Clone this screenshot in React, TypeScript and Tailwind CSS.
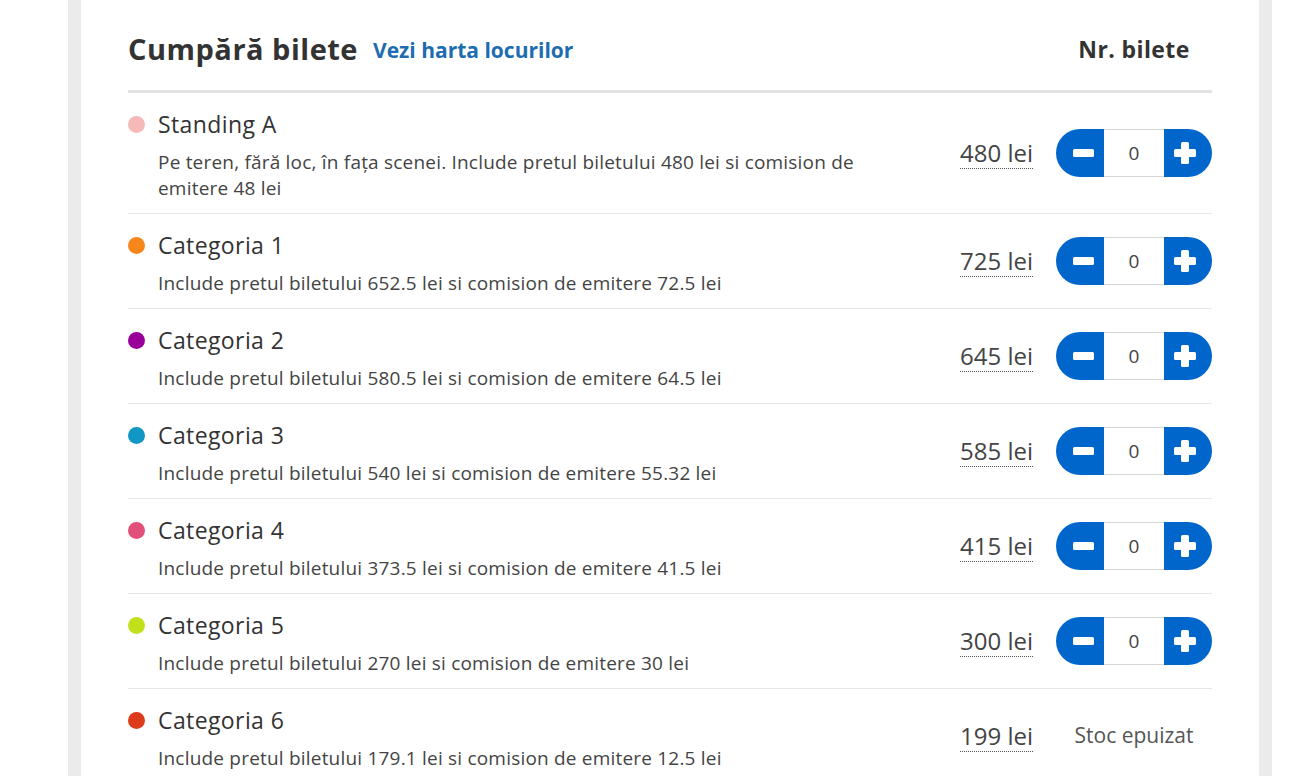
import { useState } from "react";

interface Ticket {
  name: string;
  desc: string;
  price: number;
  color: string;
  soldOut?: boolean;
}

const tickets: Ticket[] = [
  {
    name: "Standing A",
    desc: "Pe teren, fără loc, în fața scenei. Include pretul biletului 480 lei si comision de emitere 48 lei",
    price: 480,
    color: "#f5b9b7",
  },
  { name: "Categoria 1", desc: "Include pretul biletului 652.5 lei si comision de emitere 72.5 lei", price: 725, color: "#f7861c" },
  { name: "Categoria 2", desc: "Include pretul biletului 580.5 lei si comision de emitere 64.5 lei", price: 645, color: "#990099" },
  { name: "Categoria 3", desc: "Include pretul biletului 540 lei si comision de emitere 55.32 lei", price: 585, color: "#1197c4" },
  { name: "Categoria 4", desc: "Include pretul biletului 373.5 lei si comision de emitere 41.5 lei", price: 415, color: "#e0507b" },
  { name: "Categoria 5", desc: "Include pretul biletului 270 lei si comision de emitere 30 lei", price: 300, color: "#c3e01c" },
  {
    name: "Categoria 6",
    desc: "Include pretul biletului 179.1 lei si comision de emitere 12.5 lei",
    price: 199,
    color: "#dc3b1c",
    soldOut: true,
  },
];

function Stepper() {
  const [count, setCount] = useState(0);
  return (
    <div className="flex h-[48px] w-[156px]">
      <button
        onClick={() => setCount((c) => Math.max(0, c - 1))}
        className="flex w-[48px] items-center justify-center rounded-l-full bg-[#0066cc] pl-[6px]"
      >
        <svg width="21" height="8" viewBox="0 0 21 8">
          <rect x="0" y="0" width="21" height="8" rx="1.5" fill="#fff" />
        </svg>
      </button>
      <div className="flex w-[60px] items-center justify-center border-y border-[#d6d6d6] bg-white text-[19px] text-[#444]">
        {count}
      </div>
      <button
        onClick={() => setCount((c) => c + 1)}
        className="flex w-[48px] items-center justify-center rounded-r-full bg-[#0066cc] pr-[6px]"
      >
        <svg width="22" height="22" viewBox="0 0 22 22">
          <rect x="7" y="0" width="8" height="22" rx="1.5" fill="#fff" />
          <rect x="0" y="7" width="22" height="8" rx="1.5" fill="#fff" />
        </svg>
      </button>
    </div>
  );
}

function TicketRow({ t }: { t: Ticket }) {
  return (
    <div className="flex items-center border-b border-[#e6e6e6]">
      <div className="flex-1 pt-[15px] pb-[12px]">
        <div className="flex items-center">
          <span className="h-[17px] w-[17px] shrink-0 rounded-full" style={{ backgroundColor: t.color }} />
          <span className="ml-[13px] text-[23px] leading-[32px] tracking-[0.4px] text-[#333]">{t.name}</span>
        </div>
        <div className="mt-[9px] ml-[30px] max-w-[702px] text-[19px] leading-[26px] tracking-[0.2px] text-[#444]">
          {t.desc}
        </div>
      </div>
      <div className="mr-[23px] border-b border-dotted border-[#555] text-[24px] leading-[30px] text-[#444]">
        {t.price} lei
      </div>
      {t.soldOut ? (
        <div className="flex w-[156px] justify-center text-[21px] text-[#555]">Stoc epuizat</div>
      ) : (
        <Stepper />
      )}
    </div>
  );
}

export default function App() {
  return (
    <div className="min-h-[776px] bg-white" style={{ fontFamily: '"Open Sans", "Noto Sans", sans-serif' }}>
      <div className="ml-[68px] w-[1204px] border-x-[13px] border-[#ebebeb] bg-white pl-[47px] pr-[47px]">
        <div className="flex h-[90px] items-center pt-[8px]">
          <h2 className="text-[29px] font-bold leading-[36px] tracking-[0.5px] text-[#333]">Cumpără bilete</h2>
          <a className="ml-[15px] mt-[4px] text-[21px] font-bold text-[#1d6db0]">Vezi harta locurilor</a>
          <div className="ml-auto w-[156px] text-center text-[23px] font-bold tracking-[0.4px] text-[#333]">
            Nr. bilete
          </div>
        </div>
        <div className="h-[3px] bg-[#e3e3e3]" />
        {tickets.map((t) => (
          <TicketRow key={t.name} t={t} />
        ))}
      </div>
    </div>
  );
}
